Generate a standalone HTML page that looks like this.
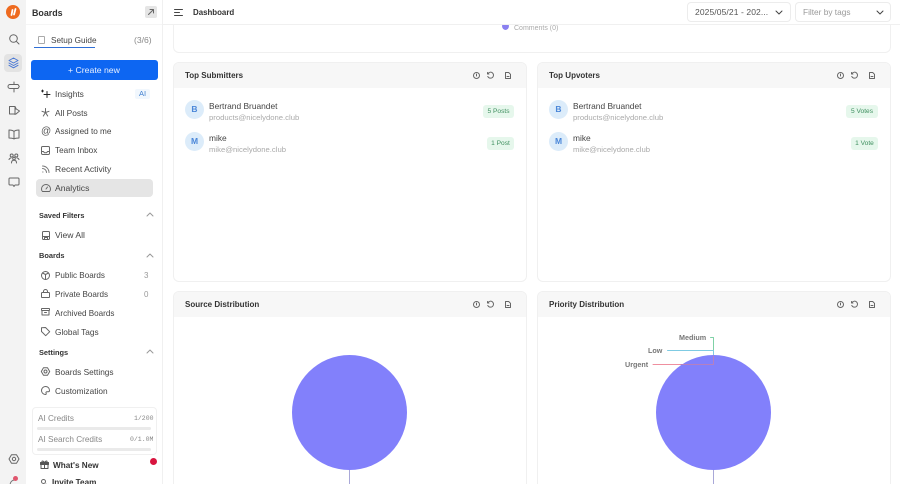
<!DOCTYPE html>
<html><head><meta charset="utf-8"><title>Dashboard</title>
<style>
html,body{margin:0;padding:0;width:900px;height:484px;overflow:hidden;background:#fff;font-family:"Liberation Sans",sans-serif;color:#333}
*{box-sizing:border-box}
#wrap{position:relative;width:900px;height:484px;overflow:hidden;background:#fff}
.a{position:absolute}
.t{position:absolute;white-space:nowrap;line-height:12px;font-size:8.4px;color:#444}
.b{font-weight:700}
.h{font-size:8px;color:#333;font-weight:700}
.s{font-size:7.4px;color:#333;font-weight:700}
.card{position:absolute;background:#fff;border:1px solid #f0f0f0;border-radius:6px;overflow:hidden}
.ch{position:absolute;left:0;right:0;top:0;height:25px;background:#f7f7f7}
.av{position:absolute;width:19px;height:19px;border-radius:50%;background:#dcecfa;color:#4a86d8;font-size:8.5px;font-weight:700;text-align:center;line-height:19px}
.pill{position:absolute;height:13px;border-radius:3px;background:#e6f7ec;color:#3f8f5f;font-size:6.6px;line-height:13px;text-align:center}
.em{font-size:7.7px;color:#aaa}
svg{position:absolute;overflow:visible;fill:none;stroke:#666;stroke-width:1;stroke-linecap:round;stroke-linejoin:round}
.sel{position:absolute;top:2px;height:20px;border:1px solid #ececec;border-radius:4px;background:#fff}
</style></head><body><div id="wrap">

<!-- rail -->
<div class="a" style="left:0;top:0;width:26px;height:484px;background:#f3f3f3"></div>
<div class="a" style="left:6px;top:5px;width:14px;height:14px;border-radius:50%;background:#ee6a1f"></div>
<svg style="left:6px;top:5px;stroke:#fff;stroke-width:1.800" width="14" height="14" viewBox="0 0 14 14"><path d="M5.500 10L6.500 5M8 9.500L9.500 4"/></svg>
<svg style="left:8px;top:33px" width="12" height="12" viewBox="0 0 12 12"><circle cx="5.500" cy="5.500" r="3.800"/><path d="M8.300 8.300L11 11"/></svg>
<div class="a" style="left:4px;top:54px;width:18px;height:18px;border-radius:4px;background:#e3e3e3"></div>
<svg style="left:8px;top:57px;stroke:#4a78d4" width="11" height="12" viewBox="0 0 11 12"><path d="M5.500 1L10 3.500 5.500 6 1 3.500zM1 6l4.500 2.500L10 6M1 8.300l4.500 2.500L10 8.300"/></svg>
<svg style="left:8px;top:81px" width="12" height="12" viewBox="0 0 12 12"><path d="M6 1v2.500M6 7.500v3.500M2 3.500h8l1.300 2L10 7.500H2A2 2 0 0 1 2 3.500z"/></svg>
<svg style="left:9px;top:105px" width="12" height="11" viewBox="0 0 12 11"><path d="M.5 1.500h5.500l1 2h-.5l4 2.500-3.500 3H.5zM6 1.500v8"/></svg>
<svg style="left:8px;top:129px" width="12" height="11" viewBox="0 0 12 11"><path d="M6 2.500C5 1.500 3 1 1 1v8c2 0 4 .3 5 1 1-.7 3-1 5-1V1C9 1 7 1.500 6 2.500zM6 2.500V10"/></svg>
<svg style="left:8px;top:152px" width="12" height="12" viewBox="0 0 12 12"><circle cx="3.700" cy="3.500" r="1.500"/><circle cx="8.300" cy="3.500" r="1.500"/><circle cx="6" cy="6.500" r="1.300"/><path d="M1 7.500c.5-1 1-1.500 2-1.500M11 7.500c-.5-1-1-1.500-2-1.500M3.500 11c0-2 1-2.700 2.500-2.700S8.500 9 8.500 11"/></svg>
<svg style="left:8px;top:177px" width="12" height="11" viewBox="0 0 12 11"><path d="M2 1h8a1 1 0 0 1 1 1v5a1 1 0 0 1-1 1H7L6 9.500 5 8H2a1 1 0 0 1-1-1V2a1 1 0 0 1 1-1z"/></svg>
<svg style="left:8px;top:453px" width="12" height="12" viewBox="0 0 12 12"><path d="M3.500 1.700h5L11 6 8.500 10.300h-5L1 6z"/><circle cx="6" cy="6" r="1.700"/></svg>
<svg style="left:9px;top:477px;stroke:#777" width="10" height="10" viewBox="0 0 10 10"><path d="M1 9c0-4 2-6 5-6"/></svg>
<div class="a" style="left:13px;top:476px;width:5px;height:5px;border-radius:50%;background:#e0566e"></div>

<!-- panel -->
<div class="a" style="left:26px;top:0;width:137px;height:484px;background:#fff;border-right:1px solid #f0f0f0"></div>
<div class="a" style="left:26px;top:24px;width:136px;height:1px;background:#f5f5f5"></div>
<div class="t" style="left:32px;top:7px;font-size:8.900px;font-weight:700;color:#333">Boards</div>
<div class="a" style="left:145px;top:6px;width:12px;height:12px;border-radius:2px;background:#e5e5e5"></div>
<svg style="left:148px;top:9px;stroke:#666" width="6" height="6" viewBox="0 0 6 6"><path d="M.5 5.500L5.500 .5M2 .5h3.500V4"/></svg>

<div class="a" style="left:38px;top:36px;width:7px;height:8px;border:1px solid #aaa;border-radius:1px"></div>
<div class="t" style="left:51px;top:35px;font-size:8.200px">Setup Guide</div>
<div class="t" style="left:134px;top:34px;color:#888;font-size:8.600px">(3/6)</div>
<div class="a" style="left:34px;top:47px;width:61px;height:1px;background:#2f6fd6"></div>

<div class="a" style="left:31px;top:60px;width:127px;height:20px;border-radius:3px;background:#0d66f2"></div>
<div class="t" style="left:68px;top:64px;color:#e8f0ff;font-size:8.700px">+ Create new</div>

<svg style="left:41px;top:89px;stroke:#222" width="10" height="10" viewBox="0 0 10 10"><path d="M6 2.500v6M3 5.500h6M1.500 1v2M.5 2h2"/></svg>
<div class="t" style="left:55px;top:88px">Insights</div>
<div class="a" style="left:135px;top:89px;width:15px;height:10px;border-radius:2px;background:#f1f7fd"></div>
<div class="t" style="left:139px;top:88px;color:#3f7fd0;font-size:7.500px">AI</div>

<svg style="left:41px;top:108px" width="9" height="9" viewBox="0 0 9 9"><path d="M4.500 .5V4.500M4.500 4.500L1 3.300M4.500 4.500L8 3.300M4.500 4.500L2.300 8M4.500 4.500L6.700 8"/></svg>
<div class="t" style="left:55px;top:107px">All Posts</div>

<div class="t" style="left:41px;top:126px;font-size:10px;color:#555">@</div>
<div class="t" style="left:55px;top:126px;font-size:8.200px">Assigned to me</div>

<svg style="left:41px;top:146px" width="9" height="9" viewBox="0 0 9 9"><rect x=".5" y=".5" width="8" height="8" rx="1.200"/><path d="M.5 5.500h2l.8 1.200h2.400l.8-1.200h2"/></svg>
<div class="t" style="left:55px;top:145px;font-size:8.200px">Team Inbox</div>

<svg style="left:42px;top:165px;stroke:#777" width="8" height="8" viewBox="0 0 8 8"><path d="M.5 1c3.500 0 6.500 3 6.500 6.500M.5 3.500c2.200 0 4 1.800 4 4M.7 7h.3"/></svg>
<div class="t" style="left:55px;top:163px;font-size:8.600px">Recent Activity</div>

<div class="a" style="left:36px;top:179px;width:117px;height:18px;border-radius:4px;background:#e5e5e5"></div>
<svg style="left:41px;top:184px" width="10" height="8" viewBox="0 0 10 8"><path d="M1.500 7.500C.8 7 .5 6 .5 5a4.500 4.500 0 0 1 9 0c0 1-.3 2-1 2.500zM5 5l1.500-2"/></svg>
<div class="t" style="left:55px;top:182px;font-size:8.600px">Analytics</div>

<div class="t s" style="left:39px;top:210px;font-size:7.300px">Saved Filters</div>
<svg style="left:147px;top:213px;stroke:#999" width="6" height="3" viewBox="0 0 6 3"><path d="M0 3L3 0l3 3"/></svg>
<svg style="left:42px;top:231px" width="8" height="9" viewBox="0 0 8 9"><rect x=".5" y=".5" width="7" height="8" rx="1"/><path d="M.5 5.500h7M2.500 8.500V6.500h3v2"/></svg>
<div class="t" style="left:55px;top:229px;font-size:8.600px">View All</div>

<div class="t s" style="left:39px;top:250px">Boards</div>
<svg style="left:147px;top:254px;stroke:#999" width="6" height="3" viewBox="0 0 6 3"><path d="M0 3L3 0l3 3"/></svg>
<svg style="left:41px;top:271px" width="9" height="9" viewBox="0 0 9 9"><circle cx="4.500" cy="4.500" r="4"/><path d="M1.500 2l3 1.500L7.500 2M4.500 3.500V8.500"/></svg>
<div class="t" style="left:55px;top:270px;font-size:8.100px">Public Boards</div>
<div class="t" style="left:144px;top:270px;color:#999;font-size:8px">3</div>
<svg style="left:41px;top:289px" width="9" height="9" viewBox="0 0 9 9"><rect x=".5" y="3.500" width="8" height="5" rx=".8"/><path d="M2.500 3.500V2.500a2 2 0 0 1 4 0v1"/></svg>
<div class="t" style="left:55px;top:289px;font-size:8.100px">Private Boards</div>
<div class="t" style="left:144px;top:289px;color:#999;font-size:8px">0</div>
<svg style="left:41px;top:308px" width="9" height="8" viewBox="0 0 9 8"><rect x=".5" y=".5" width="8" height="2" rx=".4"/><path d="M1 2.500v4.500h7V2.500M3.500 4.500h2"/></svg>
<div class="t" style="left:55px;top:308px;font-size:8.100px">Archived Boards</div>
<svg style="left:41px;top:327px" width="9" height="9" viewBox="0 0 9 9"><path d="M.5 .8L4.500 .5 8.700 4.700 4.700 8.700.5 4.500z"/></svg>
<div class="t" style="left:55px;top:326px;font-size:8.300px">Global Tags</div>

<div class="t s" style="left:39px;top:347px">Settings</div>
<svg style="left:147px;top:350px;stroke:#999" width="6" height="3" viewBox="0 0 6 3"><path d="M0 3L3 0l3 3"/></svg>
<svg style="left:41px;top:367px" width="9" height="9" viewBox="0 0 9 9"><path d="M2.500 .8h4L8.700 4.500 6.500 8.200h-4L.3 4.500z"/><circle cx="4.500" cy="4.500" r="1.500"/></svg>
<div class="t" style="left:55px;top:366px;font-size:8.300px">Boards Settings</div>
<svg style="left:41px;top:386px" width="9" height="9" viewBox="0 0 9 9"><path d="M4.500.5a4 4 0 1 0 0 8c1 0 .8-1 .5-1.500-.3-.6.2-1.200 1-1.200h1.200c.6 0 1.300-.4 1.300-1.300C8.500 2 6.700.5 4.500.5z"/></svg>
<div class="t" style="left:55px;top:385px;font-size:8.300px">Customization</div>

<div class="a" style="left:32px;top:407px;width:125px;height:48px;border:1px solid #f0f0f0;border-radius:4px;background:#fff"></div>
<div class="t" style="left:38px;top:413px;color:#888;font-size:8.200px">AI Credits</div>
<div class="t" style="left:134px;top:413px;color:#888;font-size:6.500px;font-family:'Liberation Mono',monospace">1/200</div>
<div class="a" style="left:37px;top:427px;width:114px;height:3px;border-radius:2px;background:#eaeaea"></div>
<div class="t" style="left:38px;top:434px;color:#888;font-size:8.200px">AI Search Credits</div>
<div class="t" style="left:130px;top:434px;color:#888;font-size:6.500px;font-family:'Liberation Mono',monospace">0/1.0M</div>
<div class="a" style="left:37px;top:448px;width:114px;height:3px;border-radius:2px;background:#eaeaea"></div>

<svg style="left:40px;top:460px;stroke:#555" width="9" height="9" viewBox="0 0 9 9"><rect x=".5" y="2.500" width="8" height="2" fill="#555"/><path d="M1 4.500v4h7v-4M4.500 2.500v6M4.500 2.500C3 .5 1.500.5 2 2.500M4.500 2.500C6 .5 7.500.5 7 2.500"/></svg>
<div class="t" style="left:53px;top:460px;color:#333;font-weight:700;font-size:8.200px">What's New</div>
<div class="a" style="left:150px;top:458px;width:7px;height:7px;border-radius:50%;background:#d8153f"></div>
<svg style="left:40px;top:479px" width="8" height="8" viewBox="0 0 8 8"><circle cx="3.500" cy="2.500" r="2"/><path d="M1 8c0-1.500 1-2.500 2.500-2.500M6 5v3M4.500 6.500h3"/></svg>
<div class="t" style="left:52px;top:477px;color:#333;font-weight:700;font-size:8.200px">Invite Team</div>

<!-- main top card -->
<div class="a" style="left:173px;top:10px;width:718px;height:43px;background:#fff;border:1px solid #f0f0f0;border-radius:6px"></div>
<div class="a" style="left:502px;top:24px;width:7px;height:6px;border-radius:50% 50% 50% 50%/30% 30% 70% 70%;background:#8a80f0"></div>
<div class="t" style="left:514px;top:23px;font-size:7px;color:#aaa">Comments (0)</div>

<!-- header -->
<div class="a" style="left:163px;top:0;width:737px;height:25px;background:#fff;border-bottom:1px solid #f0f0f0"></div>
<svg style="left:174px;top:9px;stroke:#444" width="9" height="7" viewBox="0 0 9 7"><path d="M.5 .5h8M.5 3.500h5M.5 6.500h8"/></svg>
<div class="t h" style="left:193px;top:7px;font-size:7.900px">Dashboard</div>
<div class="sel" style="left:687px;width:104px"></div>
<div class="t" style="left:695px;top:6px;font-size:8.500px;color:#555;letter-spacing:.1px">2025/05/21 - 202...</div>
<svg style="left:776px;top:11px;stroke:#444" width="6" height="3" viewBox="0 0 6 3"><path d="M0 0l3 3 3-3"/></svg>
<div class="sel" style="left:795px;width:96px"></div>
<div class="t" style="left:803px;top:6px;font-size:8.300px;color:#999">Filter by tags</div>
<svg style="left:877px;top:11px;stroke:#444" width="6" height="3" viewBox="0 0 6 3"><path d="M0 0l3 3 3-3"/></svg>

<!-- Top Submitters -->
<div class="card" style="left:173px;top:62px;width:354px;height:220px"><div class="ch"></div></div>
<div class="t h" style="left:185px;top:70px">Top Submitters</div>
<svg style="left:473px;top:72px" width="7" height="7" viewBox="0 0 7 7"><circle cx="3.500" cy="3.500" r="3"/><path d="M3.500 2v2"/></svg>
<svg style="left:487px;top:72px" width="7" height="7" viewBox="0 0 7 7"><path d="M1 1.500A3 3 0 1 1 .8 4.500M.5 .5v1.500h1.500"/></svg>
<svg style="left:505px;top:72px" width="6" height="7" viewBox="0 0 6 7"><path d="M.5.5h3.200l1.800 1.800v4.200h-5zM2 4.500h2"/></svg>
<div class="av" style="left:185px;top:100px">B</div>
<div class="t" style="left:209px;top:100px;font-size:8.400px">Bertrand Bruandet</div>
<div class="t em" style="left:209px;top:111.500px">products@nicelydone.club</div>
<div class="pill" style="left:483px;top:105px;width:31px">5 Posts</div>
<div class="av" style="left:185px;top:132px">M</div>
<div class="t" style="left:209px;top:132px;font-size:8.400px">mike</div>
<div class="t em" style="left:209px;top:143.500px">mike@nicelydone.club</div>
<div class="pill" style="left:487px;top:137px;width:27px">1 Post</div>

<!-- Top Upvoters -->
<div class="card" style="left:537px;top:62px;width:354px;height:220px"><div class="ch"></div></div>
<div class="t h" style="left:549px;top:70px">Top Upvoters</div>
<svg style="left:837px;top:72px" width="7" height="7" viewBox="0 0 7 7"><circle cx="3.500" cy="3.500" r="3"/><path d="M3.500 2v2"/></svg>
<svg style="left:851px;top:72px" width="7" height="7" viewBox="0 0 7 7"><path d="M1 1.500A3 3 0 1 1 .8 4.500M.5 .5v1.500h1.500"/></svg>
<svg style="left:869px;top:72px" width="6" height="7" viewBox="0 0 6 7"><path d="M.5.5h3.200l1.800 1.800v4.200h-5zM2 4.500h2"/></svg>
<div class="av" style="left:549px;top:100px">B</div>
<div class="t" style="left:573px;top:100px;font-size:8.400px">Bertrand Bruandet</div>
<div class="t em" style="left:573px;top:111.500px">products@nicelydone.club</div>
<div class="pill" style="left:846px;top:105px;width:32px">5 Votes</div>
<div class="av" style="left:549px;top:132px">M</div>
<div class="t" style="left:573px;top:132px;font-size:8.400px">mike</div>
<div class="t em" style="left:573px;top:143.500px">mike@nicelydone.club</div>
<div class="pill" style="left:851px;top:137px;width:27px">1 Vote</div>

<!-- Source Distribution -->
<div class="card" style="left:173px;top:291px;width:354px;height:210px"><div class="ch"></div></div>
<div class="t h" style="left:185px;top:299px">Source Distribution</div>
<svg style="left:473px;top:301px" width="7" height="7" viewBox="0 0 7 7"><circle cx="3.500" cy="3.500" r="3"/><path d="M3.500 2v2"/></svg>
<svg style="left:487px;top:301px" width="7" height="7" viewBox="0 0 7 7"><path d="M1 1.500A3 3 0 1 1 .8 4.500M.5 .5v1.500h1.500"/></svg>
<svg style="left:505px;top:301px" width="6" height="7" viewBox="0 0 6 7"><path d="M.5.5h3.200l1.800 1.800v4.200h-5zM2 4.500h2"/></svg>
<div class="a" style="left:292px;top:355px;width:115px;height:115px;border-radius:50%;background:#8280fb"></div>
<div class="a" style="left:349px;top:470px;width:1px;height:14px;background:#a9a8d8"></div>

<!-- Priority Distribution -->
<div class="card" style="left:537px;top:291px;width:354px;height:210px"><div class="ch"></div></div>
<div class="t h" style="left:549px;top:299px">Priority Distribution</div>
<svg style="left:837px;top:301px" width="7" height="7" viewBox="0 0 7 7"><circle cx="3.500" cy="3.500" r="3"/><path d="M3.500 2v2"/></svg>
<svg style="left:851px;top:301px" width="7" height="7" viewBox="0 0 7 7"><path d="M1 1.500A3 3 0 1 1 .8 4.500M.5 .5v1.500h1.500"/></svg>
<svg style="left:869px;top:301px" width="6" height="7" viewBox="0 0 6 7"><path d="M.5.5h3.200l1.800 1.800v4.200h-5zM2 4.500h2"/></svg>
<svg style="left:0;top:0" width="900" height="484" viewBox="0 0 900 484">
<path d="M710.500 337.500h3V355" stroke="#7fd1a6"/>
<path d="M667.500 350.500h46V356" stroke="#7fcbe3"/>
<path d="M653 364.500h60.500V356" stroke="#ef8f9f"/>
</svg>
<div class="a" style="left:656px;top:355px;width:115px;height:115px;border-radius:50%;background:#8280fb"></div>
<svg style="left:0;top:0" width="900" height="484" viewBox="0 0 900 484"><path d="M681 364.500h32.500V356" stroke="#b57fc0"/></svg>
<div class="a" style="left:713px;top:470px;width:1px;height:14px;background:#a9a8d8"></div>
<div class="t b" style="left:679px;top:332px;font-size:7.200px;color:#777">Medium</div>
<div class="t b" style="left:648px;top:345px;font-size:7.200px;color:#777">Low</div>
<div class="t b" style="left:625px;top:359px;font-size:7.200px;color:#777">Urgent</div>

</div></body></html>
